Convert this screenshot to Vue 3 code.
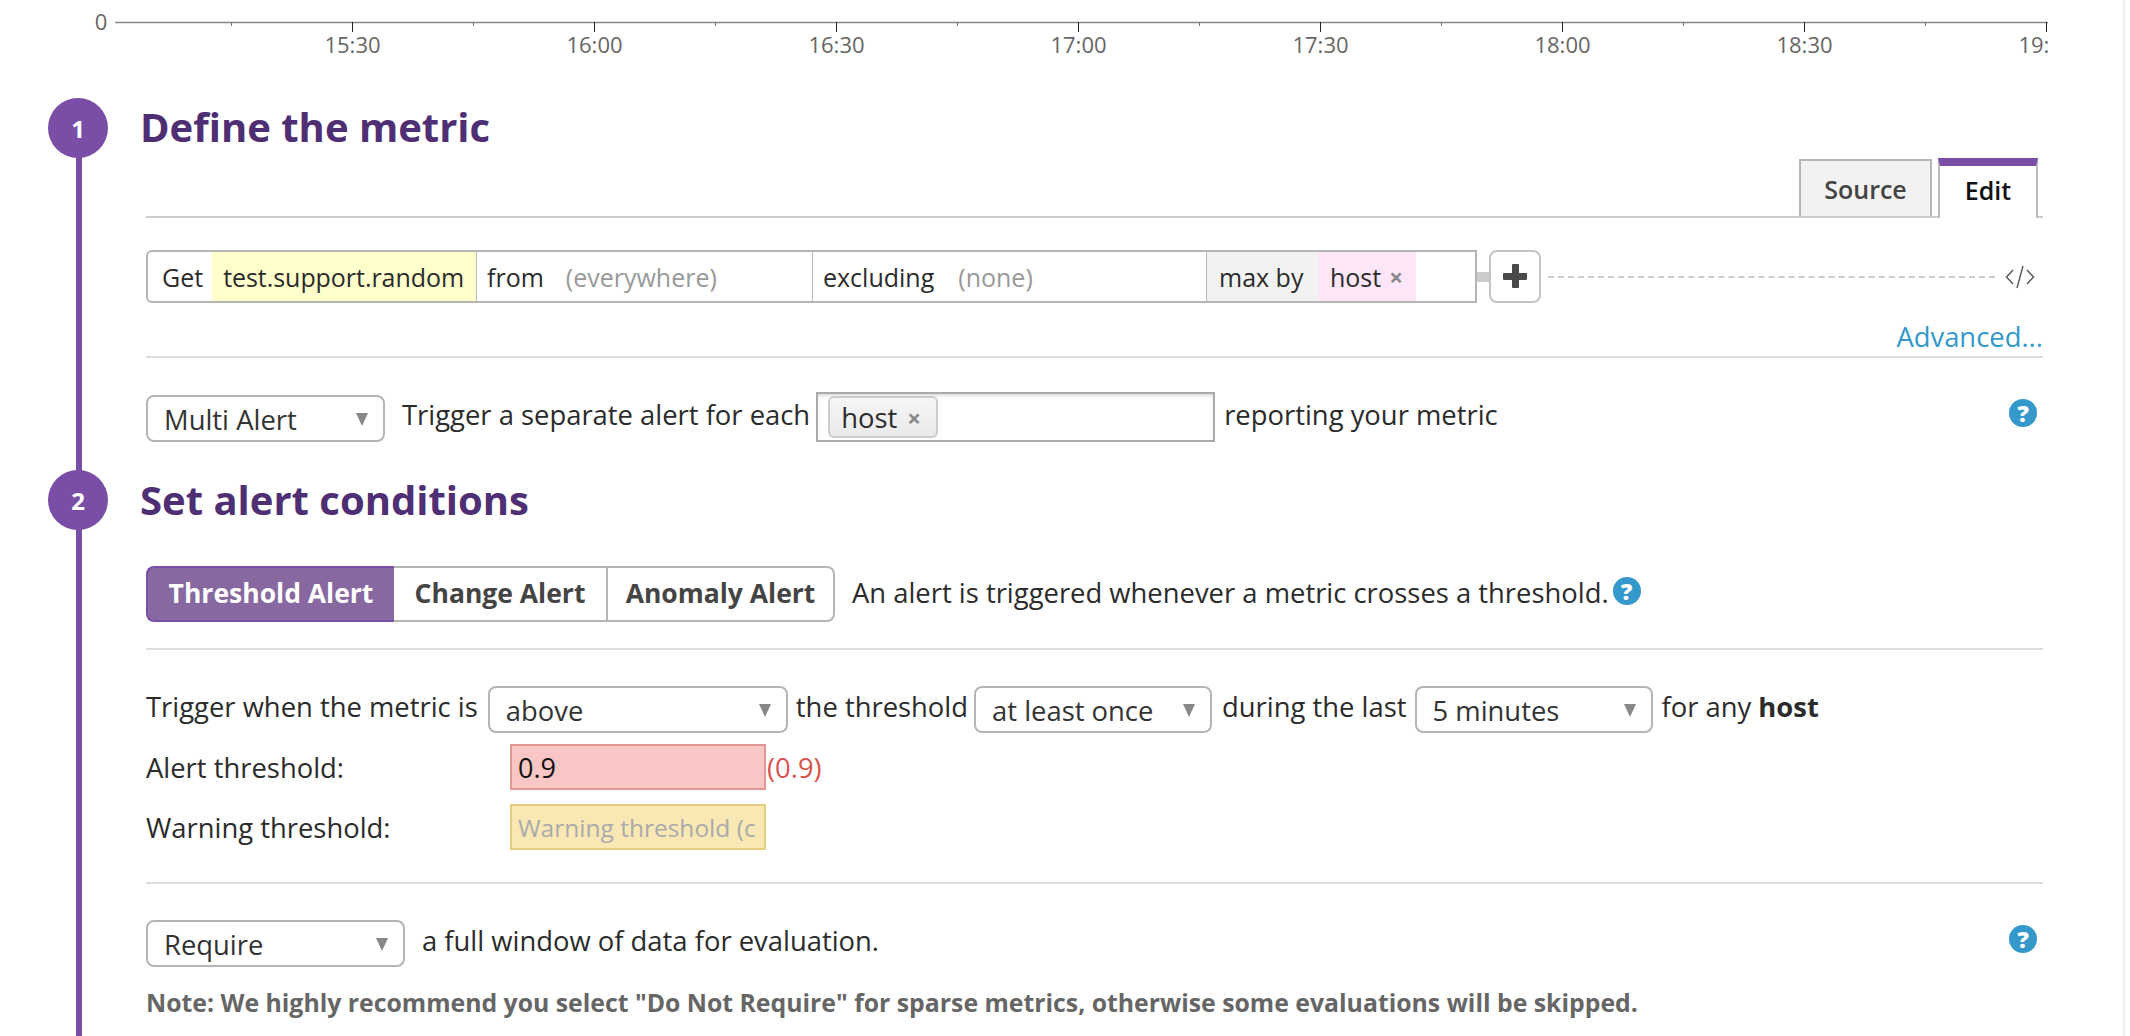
<script setup>
const majors = [
  { x: 352.5, label: '15:30' }, { x: 594.5, label: '16:00' }, { x: 836.5, label: '16:30' },
  { x: 1078.5, label: '17:00' }, { x: 1320.5, label: '17:30' }, { x: 1562.5, label: '18:00' },
  { x: 1804.5, label: '18:30' }, { x: 2046.5, label: '19:00' }
]
const minors = [231.5, 473.5, 715.5, 957.5, 1199.5, 1441.5, 1683.5, 1925.5]
</script>

<template>
  <div class="shell">
    <div class="page">
      <svg class="chart" width="2048" height="70" viewBox="0 0 2048 70">
        <text x="101" y="30" class="axis-text" text-anchor="middle">0</text>
        <line x1="115" y1="22.5" x2="2048" y2="22.5" stroke="#888" stroke-width="1.5" />
        <line v-for="m in minors" :key="m" :x1="m" :x2="m" y1="22" y2="26" stroke="#777" />
        <g v-for="t in majors" :key="t.x">
          <line :x1="t.x" :x2="t.x" y1="22" y2="32" stroke="#222" />
          <text :x="t.x" y="53" class="axis-text" text-anchor="middle">{{ t.label }}</text>
        </g>
      </svg>

      <div class="content">
        <div class="rail"></div>

        <header class="head head-1">
          <span class="step">1</span>
          <h2>Define the metric</h2>
        </header>

        <div class="tabs">
          <span class="tab">Source</span>
          <span class="tab active">Edit</span>
        </div>

        <div class="query-row">
          <div class="query">
            <div class="cell cell-get"><span>Get</span><span class="metric">test.support.random</span></div>
            <div class="cell cell-from"><span>from</span><span class="muted">(everywhere)</span></div>
            <div class="cell cell-excl"><span>excluding</span><span class="muted">(none)</span></div>
            <div class="cell cell-max">
              <span class="maxby">max by</span>
              <span class="pink">host <b class="x">×</b></span>
            </div>
          </div>
          <i class="connector"></i>
          <button class="plus" type="button"><i class="plus-h"></i><i class="plus-v"></i></button>
          <i class="dots"></i>
          <svg class="code" width="30" height="24" viewBox="0 0 30 24" fill="none" stroke="#555" stroke-width="1.4">
            <path d="M8 5 1.5 12 8 19M22 5 28.5 12 22 19M18 1 12 23" />
          </svg>
        </div>

        <div class="advanced"><a>Advanced...</a></div>

        <div class="row multi-row">
          <div class="select w-multi"><span>Multi Alert</span><i class="arrow"></i></div>
          <span class="t-raise">Trigger a separate alert for each</span>
          <div class="tagbox"><span class="tag">host <b class="x">×</b></span></div>
          <span class="t-raise">reporting your metric</span>
          <span class="help help-right">?</span>
        </div>

        <header class="head head-2">
          <span class="step">2</span>
          <h2>Set alert conditions</h2>
        </header>

        <div class="row type-row">
          <div class="btn-group">
            <span class="btn on">Threshold Alert</span>
            <span class="btn b-change">Change Alert</span>
            <span class="btn b-anomaly">Anomaly Alert</span>
          </div>
          <span class="type-desc">An alert is triggered whenever a metric crosses a threshold.</span>
          <span class="help help-inline">?</span>
        </div>

        <div class="row trigger-row">
          <span class="t-raise">Trigger when the metric is</span>
          <div class="select w-above"><span>above</span><i class="arrow"></i></div>
          <span class="t-raise">the threshold</span>
          <div class="select w-once"><span>at least once</span><i class="arrow"></i></div>
          <span class="t-raise">during the last</span>
          <div class="select w-mins"><span>5 minutes</span><i class="arrow"></i></div>
          <span class="t-raise">for any <b class="bold">host</b></span>
        </div>

        <div class="row th-row th-alert">
          <label class="th-label">Alert threshold:</label>
          <input class="th-input red" value="0.9" readonly />
          <span class="echo">(0.9)</span>
        </div>
        <div class="row th-row th-warn">
          <label class="th-label">Warning threshold:</label>
          <input class="th-input yellow" placeholder="Warning threshold (c" readonly />
        </div>

        <div class="row require-row">
          <div class="select w-req"><span>Require</span><i class="arrow"></i></div>
          <span class="t-raise">a full window of data for evaluation.</span>
          <span class="help help-right">?</span>
        </div>
        <p class="note">Note: We highly recommend you select "Do Not Require" for sparse metrics, otherwise some evaluations will be skipped.</p>
      </div>
    </div>
    <div class="gutter"></div>
  </div>
</template>

<style>
html, body { margin: 0; padding: 0; background: #fff; overflow: hidden; }
</style>

<style scoped>
.shell {
  display: flex;
  height: 1036px;
  overflow: hidden;
  font-family: "Open Sans", "Liberation Sans", sans-serif;
  font-size: 27.4px;
  color: #2b2b2b;
}
.page { width: 2123px; flex: none; }
.gutter { flex: 1; border-left: 2px solid #eee; }
.chart { display: block; }
.axis-text { font: 22px "Open Sans", sans-serif; fill: #666; }

.content { position: relative; margin-left: 146px; width: 1897px; height: 966px; }
.rail { position: absolute; left: -70px; top: 30px; bottom: 0; width: 6px; background: #7a4ea6; }

.head { display: flex; align-items: center; height: 60px; position: relative; }
.head-1 { margin-top: 28px; }
.head-2 { margin-top: 28px; }
.head h2 { margin: 0; font-size: 40px; font-weight: 700; color: #4f2f74; line-height: 60px; }
.head-1 h2 { margin-left: -6px; position: relative; top: -1px; }
.head-2 h2 { margin-left: -6px; }
.step {
  width: 60px; height: 60px; border-radius: 50%; background: #7a4ea6; color: #fff;
  font-weight: 700; font-size: 24px; display: flex; align-items: center; justify-content: center;
  margin-left: -98px; margin-right: 38px; flex: none;
}

.tabs {
  display: flex; justify-content: flex-end; align-items: flex-end; gap: 6px;
  height: 60px; box-sizing: border-box; padding-right: 5px; border-bottom: 2px solid #ccc;
  font-size: 25px;
}
.tab {
  width: 133px; height: 57px; box-sizing: border-box; background: #f2f2f2;
  border: 2px solid #b5b5b5; border-bottom: 0; font-weight: 600; color: #444;
  display: flex; align-items: center; justify-content: center;
}
.tab.active {
  width: 100px; height: 60px; margin-bottom: -2px; padding-bottom: 4px; background: #fff; color: #111;
  border-color: #bbb; border-top: 8px solid #7a4ea6;
}

.query-row { display: flex; align-items: center; margin-top: 32px; height: 53px; font-size: 25px; }
.query {
  display: flex; width: 1331px; height: 53px; box-sizing: border-box;
  border: 2px solid #b5b5b5; border-radius: 6px 0 0 6px; flex: none;
}
.cell { display: flex; align-items: center; box-sizing: border-box; border-right: 1px solid #bbb; height: 100%; }
.cell-get { width: 329px; padding-left: 14px; }
.metric { background: #ffffcc; height: 100%; margin-left: 9px; padding-left: 11px; letter-spacing: -0.05px; display: flex; align-items: center; flex: 1; }
.cell-from { width: 336px; padding-left: 10px; gap: 22px; }
.cell-excl { width: 394px; padding-left: 10px; gap: 24px; }
.cell-max { flex: 1; border-right: 0; }
.maxby { background: #f2f2f2; height: 100%; width: 111px; box-sizing: border-box; padding-left: 12px; display: flex; align-items: center; }
.pink { background: #fde6f7; height: 100%; width: 98px; box-sizing: border-box; padding-left: 12px; display: flex; align-items: center; gap: 8px; }
.muted { color: #999; }
.x { color: #888; font-weight: 700; font-size: 24px; }
.connector { width: 12px; height: 10px; background: #ccc; flex: none; }
.plus {
  position: relative; width: 52px; height: 53px; padding: 0; box-sizing: border-box; background: #fff;
  border: 2px solid #c4c4c4; border-radius: 8px; flex: none;
}
.plus-h, .plus-v { position: absolute; background: #4a4a4a; border-radius: 1px; }
.plus-h { left: 12px; top: 21px; width: 24px; height: 7px; }
.plus-v { left: 21px; top: 12px; width: 7px; height: 24px; }
.dots { width: 447px; margin-left: 7px; border-top: 2px dashed #ccc; flex: none; }
.code { margin-left: 10px; flex: none; }

.advanced {
  height: 36px; margin-top: 19px; box-sizing: border-box; border-bottom: 2px solid #ddd;
  text-align: right; line-height: 30px; color: #3498cb;
}

.row { display: flex; align-items: center; position: relative; }
.multi-row { margin-top: 34px; height: 50px; }
.t-raise { position: relative; top: -3px; white-space: pre; }
.select {
  display: flex; align-items: center; justify-content: space-between; box-sizing: border-box;
  height: 47px; background: #fff; border: 2px solid #b5b5b5; border-radius: 8px;
  padding: 2px 15px 0 16px; flex: none; color: #333;
}
.arrow {
  width: 0; height: 0; border-left: 6px solid transparent; border-right: 6px solid transparent;
  border-top: 13px solid #888; margin-top: 0;
}
.multi-row .select { margin-top: 2px; }
.w-multi { width: 239px; margin-right: 17px; }
.tagbox {
  box-sizing: border-box; width: 399px; height: 50px; margin: 0 9px 0 6px; padding: 2px 10px;
  border: 2px solid #aaa; box-shadow: inset 0 3px 4px -2px #ccc;
}
.tag {
  display: inline-flex; align-items: center; gap: 10px; box-sizing: border-box; height: 42px; width: 110px;
  padding-left: 11px; border: 2px solid #ccc; border-radius: 6px;
  background: linear-gradient(#f6f6f6, #e9e9e9);
}
.help {
  display: flex; align-items: center; justify-content: center; width: 28px; height: 28px; border-radius: 50%;
  background: #3498cb; color: #fff; font-weight: 800; font-size: 23px; line-height: 1;
}
.help-right { position: absolute; left: 1863px; top: 7px; }
.help-inline { margin-left: 4px; position: relative; top: -3px; }

.type-row { margin-top: 36px; height: 56px; padding-bottom: 26px; box-sizing: content-box; border-bottom: 2px solid #ddd; }
.btn-group { display: flex; height: 56px; font-size: 26.5px; }
.btn {
  display: flex; align-items: center; justify-content: center; box-sizing: border-box; height: 56px;
  padding-bottom: 3px; border: 2px solid #b5b5b5; border-left: 0; font-weight: 700; color: #444; background: #fff;
}
.btn.on { width: 248px; background: #8768a0; color: #fff; border: 2px solid #7a4ea6; border-right: 0; border-radius: 8px 0 0 8px; }
.b-change { width: 214px; }
.b-anomaly { width: 227px; border-radius: 0 8px 8px 0; }
.type-desc { margin-left: 17px; position: relative; top: -2px; }

.trigger-row { margin-top: 36px; height: 47px; }
.w-above { width: 300px; margin: 0 8px 0 10px; }
.w-once { width: 238px; margin: 0 10px 0 6px; }
.w-mins { width: 238px; margin: 0 9px 0 8px; }
.bold { font-weight: 700; }

.th-alert { margin-top: 11px; height: 46px; }
.th-warn { margin-top: 14px; height: 46px; }
.th-label { width: 364px; flex: none; }
.th-input {
  box-sizing: border-box; width: 256px; height: 46px; padding: 0 6px; margin: 0;
  font: 27px "Open Sans", sans-serif; color: #111; border: 2px solid; outline: 0; border-radius: 0;
}
.red { background: #f8c6c4; border-color: #e29794; }
.yellow { background: #f9e8b4; border-color: #e5cd80; font-size: 24.5px; }
.yellow::placeholder { color: #aaa; opacity: 1; }
.echo { color: #d9534f; margin-left: 1px; }

.require-row { margin-top: 36px; padding-top: 36px; height: 47px; border-top: 2px solid #ddd; }
.require-row .help-right { top: 41px; }
.th-warn + .require-row { margin-top: 32px; }
.w-req { width: 259px; margin-right: 17px; }
.note { margin: 20px 0 0; font-weight: 700; font-size: 24.8px; line-height: 30px; color: #666; }
</style>
